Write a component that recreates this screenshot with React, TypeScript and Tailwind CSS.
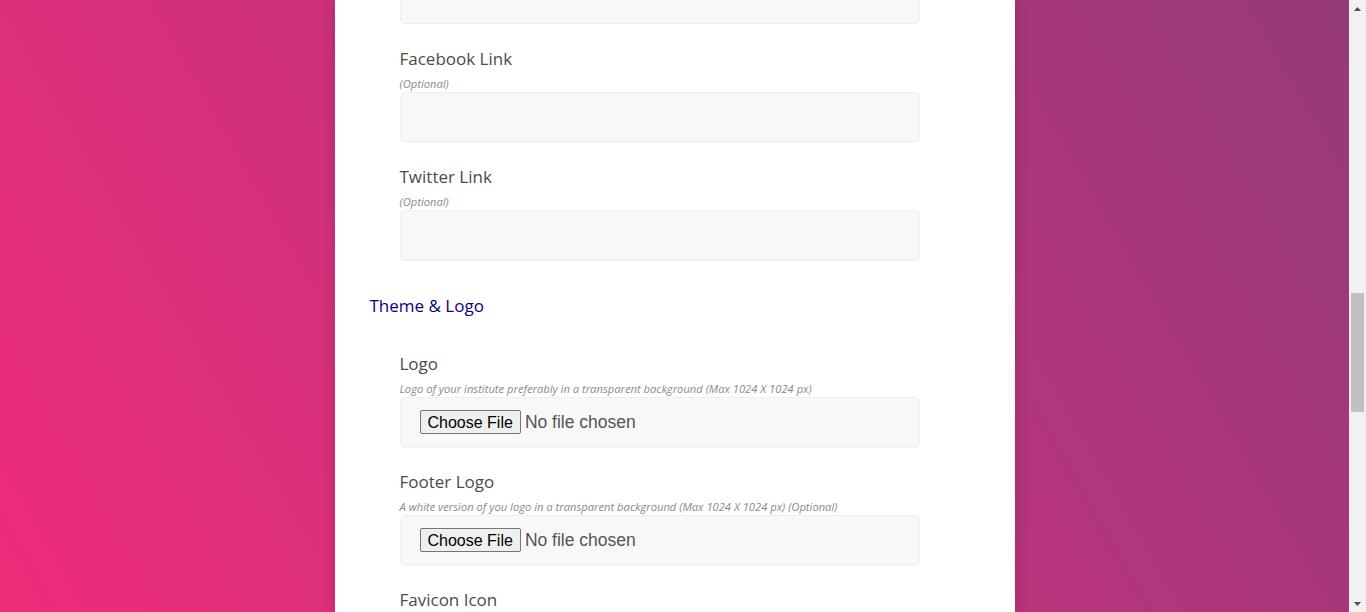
import React from 'react';

interface FieldProps {
  label: string;
  hint?: string;
  file?: boolean;
}

function Field({ label, hint, file }: FieldProps) {
  return (
    <div className="mb-[23px] pl-[65px]">
      <div className="text-[17px] leading-[24px] text-[#4b4b4b]">{label}</div>
      <div className="mt-[5px] h-[16px] text-[11.2px] leading-[16px] italic text-[#8a8a8a]">
        {hint}
      </div>
      <div className="flex h-[50px] w-[520px] items-center rounded-[5px] border border-[#eeeeee] bg-[#f8f8f8] pl-[19px] shadow-[0_1px_1px_rgba(0,0,0,0.04)]">
        {file && (
          <input
            type="file"
            className="font-['Liberation_Sans',Arial,sans-serif] text-[17.5px] text-[#555555] file:mr-[4px] file:h-[24px] file:rounded-[2px] file:border file:border-solid file:border-[#767676] file:bg-[#efefef] file:px-[7px] file:text-[16px] file:text-black"
          />
        )}
      </div>
    </div>
  );
}

function Scrollbar() {
  return (
    <div className="flex h-[612px] w-[17px] shrink-0 flex-col bg-[#f1f1f1]">
      <div className="flex h-[17px] items-center justify-center">
        <svg width="9" height="6" viewBox="0 0 9 6">
          <path d="M4.5 1 L8 5 L1 5 Z" fill="#505050" />
        </svg>
      </div>
      <div className="h-[276px]" />
      <div className="mx-[2px] h-[119px] bg-[#c1c1c1]" />
      <div className="flex-1" />
      <div className="flex h-[17px] items-center justify-center">
        <svg width="9" height="6" viewBox="0 0 9 6">
          <path d="M1 1 L8 1 L4.5 5 Z" fill="#505050" />
        </svg>
      </div>
    </div>
  );
}

export default function App() {
  return (
    <div className="flex h-[612px] w-full overflow-hidden font-['Open_Sans',sans-serif]">
      <div className="flex flex-1 justify-center bg-[linear-gradient(60deg,#ef2c7a,#953a7a)]">
        <div className="h-[612px] w-[680px] bg-white shadow-[0_0_12px_rgba(0,0,0,0.18)]">
          {/* tail of the previous field, scrolled off the top */}
          <div className="mb-[23px] pl-[65px]">
            <div className="-mt-[26px] h-[50px] w-[520px] rounded-[5px] border border-[#eeeeee] bg-[#f8f8f8]" />
          </div>

          <Field label="Facebook Link" hint="(Optional)" />
          <Field label="Twitter Link" hint="(Optional)" />

          <h2 className="mb-[34px] mt-[34px] pl-[35px] text-[17px] font-medium leading-[24px] text-[#0b0080]">
            Theme &amp; Logo
          </h2>

          <Field
            label="Logo"
            hint="Logo of your institute preferably in a transparent background (Max 1024 X 1024 px)"
            file
          />
          <Field
            label="Footer Logo"
            hint="A white version of you logo in a transparent background (Max 1024 X 1024 px) (Optional)"
            file
          />
          <Field label="Favicon Icon" />
        </div>
      </div>
      <Scrollbar />
    </div>
  );
}
